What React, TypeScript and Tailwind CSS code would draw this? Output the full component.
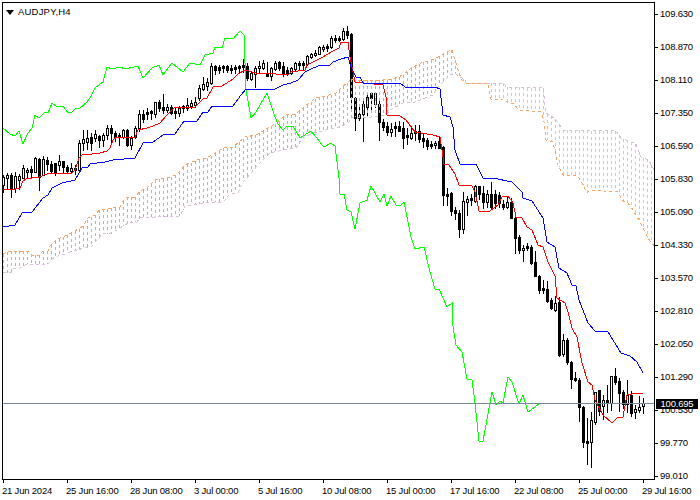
const C: number[][] = [
[175,192,177,185,1],[173,188,175,178,1],[173,197,175,188,0],[172,192,176,188,1],[174,189,176,180,1],[165,178,168,178,1],[168,178,170,172,1],[166,178,169,172,0],
[157,172,158,172,1],[158,190,159,177,0],[156,175,159,175,1],[157,170,160,164,0],[161,173,164,171,0],[163,175,163,172,0],[155,170,161,165,1],[162,173,161,167,0],
[165,173,167,171,0],[163,173,168,171,1],[165,174,168,170,1],[140,172,143,170,1],[130,150,139,143,1],[130,149,138,142,1],[133,150,137,143,0],[130,141,134,138,1],
[135,147,136,140,0],[133,146,135,140,1],[125,139,128,135,1],[125,143,128,133,0],[131,141,133,137,0],[133,145,135,137,0],[129,138,130,137,1],[129,146,130,145,0],
[136,149,138,145,1],[126,138,128,137,1],[110,131,114,128,1],[110,122,114,119,0],[108,119,112,114,0],[110,119,111,113,0],[102,117,102,114,1],[100,111,102,108,0],
[94,113,107,110,0],[104,112,107,110,1],[105,114,107,113,0],[107,118,111,113,0],[106,116,108,113,1],[105,112,106,108,1],[98,110,105,108,1],[100,108,103,106,1],
[97,107,102,105,1],[85,100,88,98,1],[77,90,84,89,1],[78,90,82,86,1],[63,84,66,83,1],[65,74,66,70,0],[65,73,67,70,0],[65,72,66,68,0],
[65,72,66,70,0],[65,73,68,70,0],[65,73,67,69,0],[65,72,66,68,0],[59,72,65,67,0],[63,80,66,78,0],[72,80,73,79,1],[66,87,68,74,1],
[61,73,66,68,1],[60,69,63,68,1],[62,76,74,76,0],[67,80,68,76,1],[61,70,63,69,1],[61,70,62,68,0],[62,76,66,74,0],[67,75,70,73,0],
[67,74,68,73,1],[62,70,63,69,1],[61,69,63,65,0],[61,70,63,65,0],[55,65,56,64,1],[53,58,54,57,1],[50,56,53,55,1],[46,54,47,54,1],
[45,51,47,49,1],[44,51,46,48,0],[36,48,38,47,1],[35,42,38,40,0],[36,41,38,40,0],[28,40,31,39,1],[26,38,31,35,0],[33,108,34,97,0],
[97,130,98,118,0],[105,120,114,118,1],[98,141,104,114,1],[94,115,97,107,1],[92,110,93,98,0],[92,107,93,104,1],[100,140,104,122,0],[119,130,122,127,0],
[122,135,126,132,0],[123,136,129,132,1],[122,136,126,128,0],[121,130,126,131,0],[122,148,128,138,0],[128,144,135,137,0],[127,139,133,138,1],[125,140,131,133,1],
[125,142,131,139,0],[133,147,138,141,0],[138,149,140,146,0],[141,148,144,146,0],[141,148,143,145,1],[136,148,141,148,0],[146,205,147,195,0],[188,205,194,196,0],
[192,215,193,211,0],[207,219,210,213,0],[210,237,213,229,0],[192,233,201,229,1],[196,215,199,202,1],[194,205,198,200,0],[185,202,186,201,1],[186,199,186,194,0],
[186,208,193,202,0],[190,207,194,202,1],[182,208,194,207,0],[190,208,194,203,0],[192,207,195,203,0],[200,209,204,207,0],[197,208,202,207,1],[198,218,202,218,0],
[217,253,218,238,0],[235,253,237,250,0],[245,261,248,250,1],[243,250,246,248,0],[245,264,247,263,0],[251,276,262,276,0],[275,293,276,290,0],[280,293,288,290,0],
[281,302,289,301,0],[298,309,300,308,0],[296,311,303,310,1],[297,356,302,355,0],[334,356,340,354,1],[338,364,340,362,0],[361,388,362,379,0],[372,381,378,380,0],
[378,421,380,407,0],[406,447,407,442,0],[418,464,441,443,0],[412,467,420,442,1],[392,424,392,422,1],[390,415,390,411,0],[395,419,400,406,1],[385,412,400,403,0],
[376,410,376,403,1],[368,384,376,382,0],[378,411,381,393,0],[390,408,392,404,0],[380,412,395,404,1],[391,416,395,413,0],[405,418,409,412,1],[396,412,407,410,1],
[398,413,403,406,1],
];

const RED = "3,190 15,189 20,188 23,181 26,179 32,178 39,177 47,174 52,173 72,173 75,170 79,158 82,155 92,154 100,153 107,151 110,148 113,140 117,137 135,137 138,130 147,128 153,126 160,123 167,115 175,107 195,107 203,99 207,98 213,87 222,86 233,79 238,74 245,70 256,73 276,74 288,75 291,72 305,70 307,65 313,62 323,57 331,52 339,48 341,42 348,42 350,57 355,82 383,85 386,97 387,115 400,116 406,120 415,132 433,135 440,137 442,150 444,164 449,165 455,174 459,185 472,186 475,192 479,211 490,211 498,205 502,197 508,196 513,203 516,217 522,218 527,227 532,230 538,245 543,247 548,262 555,276 557,298 565,303 568,312 572,328 577,337 582,363 588,382 592,385 595,400 603,415 612,423 617,418 623,417 627,395 637,393 643,394";
const BLUE = "3,227 15,225 22,213 32,212 43,198 48,195 52,188 62,183 75,180 82,168 88,167 90,164 105,162 113,160 135,158 143,143 153,142 163,135 175,134 184,121 197,121 203,112 208,112 212,106 233,106 241,95 246,89 275,89 283,85 291,83 298,80 305,72 313,68 321,65 330,65 333,62 341,59 348,57 351,67 356,77 360,77 363,83 400,83 405,87 435,87 440,89 443,115 450,117 453,127 455,150 460,164 476,164 483,178 493,178 512,182 522,192 523,198 532,201 543,218 547,242 555,247 559,268 567,273 572,285 576,286 579,300 588,323 595,331 608,332 621,353 630,356 637,362 643,373";
const GREEN = "3,128 10,134 15,136 19,131 23,144 28,133 32,128 35,115 39,118 45,112 48,113 52,103 57,107 63,106 68,113 72,112 76,108 80,108 87,102 90,98 95,88 103,82 107,67 112,69 120,67 125,69 138,66 143,78 152,68 159,65 163,75 172,63 183,72 190,63 200,65 205,55 213,53 215,47 222,48 225,38 233,39 240,31 244,35 246,90 251,118 256,112 267,93 275,117 278,124 283,130 286,127 293,126 300,138 311,131 316,137 323,146 326,146 331,143 335,146 339,178 340,194 344,194 347,210 351,212 355,229 360,203 367,200 371,186 380,202 384,194 387,206 391,196 396,205 400,206 404,202 411,237 415,249 424,247 430,272 435,289 439,289 447,307 452,303 452,320 456,345 462,352 467,379 472,380 475,403 479,441 483,441 490,403 492,392 496,405 500,401 503,403 508,377 512,382 519,404 523,395 528,412 539,404";
const SPAN_A = "3,254 10,251 28,251 32,255 40,255 43,251 48,251 50,246 55,241 60,238 67,235 75,231 83,226 88,218 95,215 100,209 108,209 112,208 120,207 123,201 127,197 135,197 140,191 147,188 152,183 155,180 167,178 176,175 180,171 185,165 197,160 207,158 217,152 223,148 233,147 245,137 256,135 268,128 276,123 286,115 296,114 305,106 316,98 326,96 336,93 351,79 355,80 383,80 393,79 403,75 411,68 421,63 435,59 446,52 452,50 458,70 462,80 466,83 488,83 491,99 503,99 508,103 513,103 519,110 541,112 544,122 546,140 553,142 558,165 563,175 577,175 582,183 587,193 590,190 618,192 622,200 630,205 640,222 648,238 654,246";
const SPAN_B = "3,273 12,272 13,269 20,268 27,264 48,264 52,259 55,257 65,254 73,251 92,246 102,234 112,233 120,228 128,223 137,222 140,218 155,217 180,216 185,206 200,204 210,202 223,202 230,194 238,193 243,182 258,165 270,153 283,150 296,148 303,138 313,133 340,127 348,123 353,117 363,118 386,115 390,110 403,103 415,102 433,95 438,87 450,75 455,73 460,77 465,80 466,83 504,83 506,87 543,88 546,113 554,118 558,122 563,130 616,131 621,138 636,144 641,157 649,160 651,165 654,170";

const pts = (s: string) => s.split(" ").map((p) => p.split(",").map(Number));
const at = (line: number[][], x: number) => {
  for (let i = 1; i < line.length; i++) {
    if (x <= line[i][0]) {
      const [x0, y0] = line[i - 1];
      const [x1, y1] = line[i];
      return Math.round(y0 + ((y1 - y0) * (x - x0)) / (x1 - x0 || 1));
    }
  }
  return line[line.length - 1][1];
};
const A = pts(SPAN_A);
const B = pts(SPAN_B);
const HATCH = Array.from({ length: 163 }, (_, i) => {
  const x = 3 + 4 * i;
  return { x, a: at(A, x), b: at(B, x) };
});

const PRICES = ["109.630","108.870","108.110","107.350","106.590","105.830","105.090","104.330","103.570","102.810","102.050","101.290","100.530","99.770","99.010"];
const TIMES = ["21 Jun 2024","25 Jun 16:00","28 Jun 08:00","3 Jul 00:00","5 Jul 16:00","10 Jul 08:00","15 Jul 00:00","17 Jul 16:00","22 Jul 08:00","25 Jul 00:00","29 Jul 16:00"];
const font = "font-['Liberation_Sans',Arial,sans-serif] text-[9.5px] leading-3 tracking-[-0.2px] text-black";

export default function App() {
  return (
    <div className={`relative flex h-[500px] w-[700px] flex-col overflow-hidden bg-white pl-[2px] pt-[2px] ${font}`}>
      <div className="flex h-[478px]">
        <div className="relative h-[478px] w-[653px] border border-black">
          <svg width="651" height="476" viewBox="3 3 651 476" className="block" shapeRendering="crispEdges">
            {C.map(([hi, lo, top, bot, up], i) => {
              const x = 3 + 4 * i;
              return (
                <g key={i}>
                  <rect x={x} y={hi} width="1" height={lo - hi + 1} fill="#000" />
                  <rect x={x - 1} y={top} width="3" height={bot - top + 1} fill="#000" />
                  {up === 1 && bot - top > 1 && <rect x={x} y={top + 1} width="1" height={bot - top - 1} fill="#fff" />}
                </g>
              );
            })}
            {HATCH.map(({ x, a, b }) => (
              <line key={x} x1={x + 0.5} x2={x + 0.5} y1={Math.min(a, b)} y2={Math.max(a, b)} stroke={a <= b ? "#f4a460" : "#d8bfd8"} strokeDasharray="3 3" />
            ))}
            <polyline points={SPAN_B} fill="none" stroke="#d8bfd8" strokeDasharray="3 3" />
            <polyline points={SPAN_A} fill="none" stroke="#f4a460" strokeDasharray="3 3" />
            <polyline points={GREEN} fill="none" stroke="#00ff00" />
            <polyline points={RED} fill="none" stroke="#ff0000" />
            <polyline points={BLUE} fill="none" stroke="#0000ff" />
            <rect x="3" y="403" width="651" height="1" fill="#778899" />
          </svg>
          <div className="absolute left-[3px] top-[3px] flex items-center gap-[4px] tracking-[0.2px]">
            <svg width="8" height="5" viewBox="0 0 8 5"><path d="M0 0h8L4 5z" fill="#000" /></svg>
            <span>AUDJPY,H4</span>
          </div>
        </div>
        <div className="flex flex-col gap-[21px] pt-[6px]">
          {PRICES.map((p) => (
            <div key={p} className="flex h-3 items-center gap-[2px]">
              <div className="h-px w-[3px] bg-black" />
              <span>{p}</span>
            </div>
          ))}
        </div>
      </div>
      <div className="ml-px flex">
        {TIMES.map((t) => (
          <div key={t} className="w-16 shrink-0">
            <div className="h-[3px] w-px bg-black" />
            <div className="-ml-px mt-[2px] whitespace-nowrap">{t}</div>
          </div>
        ))}
      </div>
      <div className="absolute left-[656px] top-[399px] flex h-[10px] w-[42px] items-center justify-center bg-black text-white">100.695</div>
    </div>
  );
}
